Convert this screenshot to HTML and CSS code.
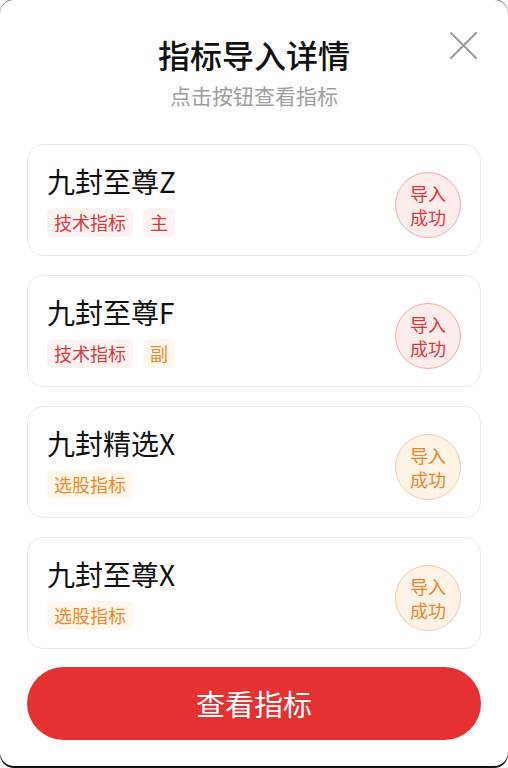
FILE: index.html
```html
<!DOCTYPE html>
<html lang="zh-CN">

<head>
    <meta charset="UTF-8">
    <meta name="viewport" content="width=device-width, initial-scale=1.0">
    <title>指标导入详情</title>
    <link rel="stylesheet" href="styles.css">
</head>

<body>
    <div class="dialog">
        <div class="dialog-hd">
            <h1 class="dialog-title">指标导入详情</h1>
            <p class="dialog-sub">点击按钮查看指标</p>
            <div class="dialog-close">
                <svg width="27" height="27" viewBox="0 0 27 27">
                    <path d="M1 1L26 26M26 1L1 26" stroke="#9a9a9a" stroke-width="2" fill="none" stroke-linecap="round" />
                </svg>
            </div>
        </div>
        <div class="ind-list">
            <div class="ind-item">
                <div class="ind-item-bd">
                    <div class="ind-name">九封至尊Z</div>
                    <div class="ind-tags">
                        <span class="tag tag-red">技术指标</span>
                        <span class="tag tag-red">主</span>
                    </div>
                </div>
                <div class="ind-status status-red">导入<br>成功</div>
            </div>
            <div class="ind-item">
                <div class="ind-item-bd">
                    <div class="ind-name">九封至尊F</div>
                    <div class="ind-tags">
                        <span class="tag tag-red">技术指标</span>
                        <span class="tag tag-orange">副</span>
                    </div>
                </div>
                <div class="ind-status status-red">导入<br>成功</div>
            </div>
            <div class="ind-item">
                <div class="ind-item-bd">
                    <div class="ind-name">九封精选X</div>
                    <div class="ind-tags">
                        <span class="tag tag-orange">选股指标</span>
                    </div>
                </div>
                <div class="ind-status status-orange">导入<br>成功</div>
            </div>
            <div class="ind-item">
                <div class="ind-item-bd">
                    <div class="ind-name">九封至尊X</div>
                    <div class="ind-tags">
                        <span class="tag tag-orange">选股指标</span>
                    </div>
                </div>
                <div class="ind-status status-orange">导入<br>成功</div>
            </div>
        </div>
        <div class="dialog-btn">查看指标</div>
    </div>
</body>

</html>
```

FILE: styles.css
```css
* {
    margin: 0;
    padding: 0;
    box-sizing: border-box;
    font-family: "Noto Sans CJK SC", "Noto Sans", sans-serif;
    font-weight: 400;
}

body {
    background: #fff;
    width: 508px;
    height: 768px;
    overflow: hidden;
}

.dialog {
    position: relative;
    height: 766px;
    background: #fff;
    border-radius: 14px;
    box-shadow: 0 -1px 0 #777, 0 2px 0 #111;
    padding: 34px 27px 0;
}

.dialog-hd {
    text-align: center;
}

.dialog-title {
    font-size: 32px;
    line-height: 40px;
    font-weight: 500;
    color: #111;
}

.dialog-sub {
    margin-top: 7px;
    font-size: 21px;
    line-height: 28px;
    color: #9e9e9e;
}

.dialog-close {
    position: absolute;
    top: 32px;
    right: 31px;
    width: 27px;
    height: 27px;
}

.ind-list {
    margin-top: 35px;
    display: flex;
    flex-direction: column;
    gap: 19px;
}

.ind-item {
    display: flex;
    align-items: center;
    height: 112px;
    padding: 18px 19px;
    border: 1px solid #e9e9e9;
    border-radius: 16px;
}

.ind-item-bd {
    flex: 1;
}

.ind-name {
    font-size: 28px;
    line-height: 36px;
    color: #111;
}

.ind-tags {
    display: flex;
    gap: 10px;
    margin-top: 9px;
}

.tag {
    height: 29px;
    line-height: 29px;
    padding: 0 7px;
    font-size: 18px;
    border-radius: 6px;
}

.tag-red {
    color: #d83a3a;
    background: #fdf2f2;
}

.tag-orange {
    color: #ee8a2a;
    background: #fff6ec;
}

.ind-status {
    width: 66px;
    height: 66px;
    margin-top: 10px;
    border-radius: 50%;
    display: flex;
    align-items: center;
    justify-content: center;
    text-align: center;
    font-size: 18px;
    line-height: 24px;
}

.status-red {
    color: #d83a3a;
    background: #fdecec;
    border: 1px solid #f1abab;
}

.status-orange {
    color: #e8862a;
    background: #fff2e6;
    border: 1px solid #f6c9a0;
}

.dialog-btn {
    margin-top: 18px;
    height: 73px;
    line-height: 73px;
    border-radius: 37px;
    background: #e63133;
    color: #fff;
    text-align: center;
    font-size: 29px;
}
```
